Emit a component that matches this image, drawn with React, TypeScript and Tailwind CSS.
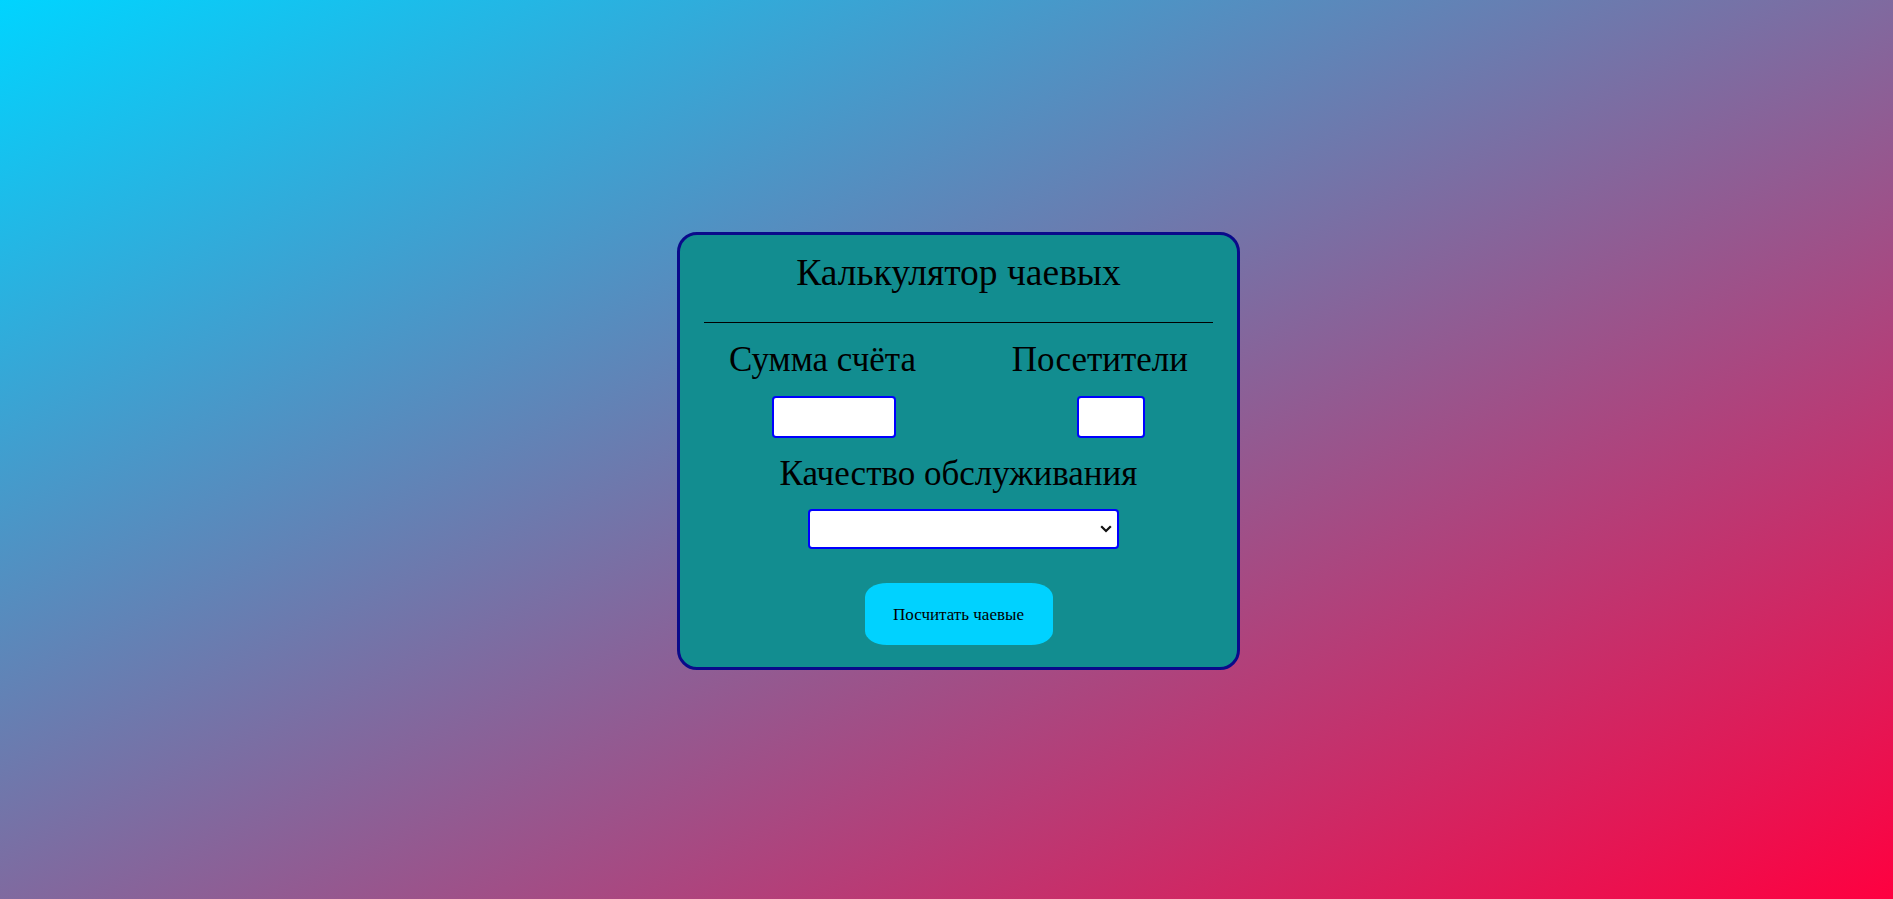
import React from "react";

export default function App() {
  return (
    <div className="min-h-screen w-full flex items-center justify-center pl-6 pt-[3px] bg-[linear-gradient(to_bottom_right,#00d4ff,#ff0040)] font-['Liberation_Serif','Times_New_Roman',serif] text-black">
      <div className="w-[563px] border-[3px] border-[#0a0a8a] rounded-[20px] bg-[#128d90] px-6 pt-[19px] pb-[22px] flex flex-col">
        <h1 className="text-[37.5px] leading-none text-center font-normal">Калькулятор чаевых</h1>
        <div className="mt-[31px] h-px bg-black" />
        <div className="mt-[19px] px-[25px] flex justify-between">
          <div className="flex flex-col items-center">
            <label className="text-[35px] leading-none whitespace-nowrap">Сумма счёта</label>
            <input
              type="text"
              className="mt-[19px] ml-[23px] w-[124px] h-[42px] bg-white border-2 border-[#0000ff] rounded-[4px] outline-none"
            />
          </div>
          <div className="flex flex-col items-center">
            <label className="text-[35px] leading-none whitespace-nowrap">Посетители</label>
            <input
              type="text"
              className="mt-[19px] ml-[23px] w-[68px] h-[42px] bg-white border-2 border-[#0000ff] rounded-[4px] outline-none"
            />
          </div>
        </div>
        <div className="mt-[18px] text-[35px] leading-none text-center whitespace-nowrap">Качество обслуживания</div>
        <div className="mt-[18px] flex justify-center">
          <div className="relative ml-[10px] w-[311px] h-[40px]">
            <select className="appearance-none w-full h-full bg-white border-2 border-[#0000ff] rounded-[4px] outline-none">
              <option value=""></option>
            </select>
            <svg
              className="absolute right-[7px] top-[16px] pointer-events-none"
              width="12"
              height="8"
              viewBox="0 0 12 8"
              fill="none"
            >
              <path d="M1.2 1.2 L6 6 L10.8 1.2" stroke="#111" strokeWidth="2.2" />
            </svg>
          </div>
        </div>
        <div className="mt-[34px] flex justify-center">
          <button className="w-[188px] h-[62px] bg-[#00d2ff] rounded-[22px_/_14px] text-[17px] leading-none text-black">
            Посчитать чаевые
          </button>
        </div>
      </div>
    </div>
  );
}
